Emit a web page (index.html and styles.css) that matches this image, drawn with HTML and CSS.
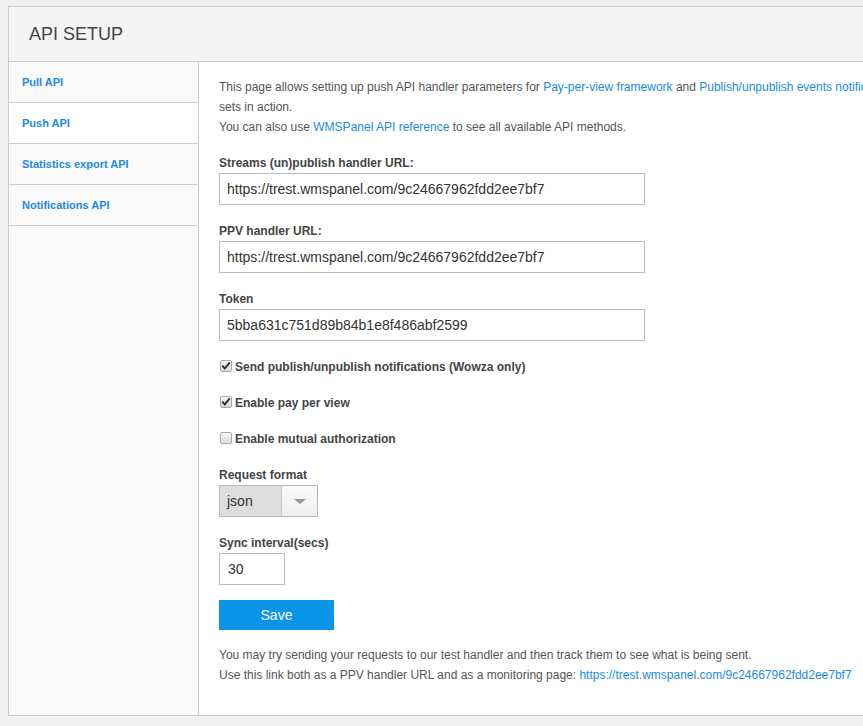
FILE: index.html
```html
<!DOCTYPE html>
<html>
<head>
<meta charset="utf-8">
<link rel="stylesheet" href="styles.css">
</head>
<body>
<div class="panel">
  <div class="header">API SETUP</div>
  <div class="main">
    <nav class="sidebar">
      <a class="nav-item">Pull API</a>
      <a class="nav-item active">Push API</a>
      <a class="nav-item">Statistics export API</a>
      <a class="nav-item">Notifications API</a>
    </nav>
    <div class="content">
      <p class="intro"><span class="nowrap">This page allows setting up push API handler parameters for <a class="link">Pay-per-view framework</a> and <a class="link">Publish/unpublish events notifications</a>. Please see how these API</span><br>sets in action.<br>You can also use <a class="link">WMSPanel API reference</a> to see all available API methods.</p>

      <div class="field">
        <label class="label">Streams (un)publish handler URL:</label>
        <div class="input wide">https://trest.wmspanel.com/9c24667962fdd2ee7bf7</div>
      </div>
      <div class="field">
        <label class="label">PPV handler URL:</label>
        <div class="input wide">https://trest.wmspanel.com/9c24667962fdd2ee7bf7</div>
      </div>
      <div class="field">
        <label class="label">Token</label>
        <div class="input wide">5bba631c751d89b84b1e8f486abf2599</div>
      </div>

      <div class="check-row first">
        <span class="checkbox"><svg width="10" height="9" viewBox="0 0 10 9"><path d="M1.2 4.6 L3.8 7.4 L8.8 1.4" fill="none" stroke="#333" stroke-width="2"/></svg></span>
        <span class="check-label">Send publish/unpublish notifications (Wowza only)</span>
      </div>
      <div class="check-row">
        <span class="checkbox"><svg width="10" height="9" viewBox="0 0 10 9"><path d="M1.2 4.6 L3.8 7.4 L8.8 1.4" fill="none" stroke="#333" stroke-width="2"/></svg></span>
        <span class="check-label">Enable pay per view</span>
      </div>
      <div class="check-row last">
        <span class="checkbox"></span>
        <span class="check-label">Enable mutual authorization</span>
      </div>

      <div class="field">
        <label class="label">Request format</label>
        <div class="select">
          <span class="select-value">json</span>
          <span class="select-arrow"><span class="triangle"></span></span>
        </div>
      </div>
      <div class="field">
        <label class="label">Sync interval(secs)</label>
        <div class="input short">30</div>
      </div>

      <button class="save">Save</button>

      <p class="note">You may try sending your requests to our test handler and then track them to see what is being sent.<br>Use this link both as a PPV handler URL and as a monitoring page: <a class="link">https://trest.wmspanel.com/9c24667962fdd2ee7bf7</a></p>
    </div>
  </div>
</div>
</body>
</html>
```

FILE: styles.css
```css
html, body {
  margin: 0;
  padding: 0;
  overflow: hidden;
}
body {
  background: #f0f0f0;
  font-family: "Liberation Sans", Arial, sans-serif;
  width: 863px;
  height: 726px;
}
.panel {
  margin: 6px 0 0 8px;
  width: 1100px;
  height: 710px;
  box-sizing: border-box;
  border: 1px solid #cccccc;
  background: #ffffff;
  display: flex;
  flex-direction: column;
}
.header {
  height: 54px;
  border-bottom: 1px solid #cccccc;
  background: #f4f4f4;
  padding-left: 20px;
  display: flex;
  align-items: center;
  font-size: 18px;
  color: #444444;
  flex-shrink: 0;
}
.main {
  flex: 1;
  display: flex;
}
.sidebar {
  width: 189px;
  border-right: 1px solid #cccccc;
  background: #fafafa;
  display: flex;
  flex-direction: column;
  flex-shrink: 0;
}
.nav-item {
  height: 40px;
  border-bottom: 1px solid #cccccc;
  display: flex;
  align-items: center;
  padding-left: 13px;
  font-size: 11px;
  font-weight: bold;
  color: #1b8be3;
}
.nav-item.active {
  background: #ffffff;
}
.content {
  padding: 15px 20px 0 20px;
  font-size: 12px;
  line-height: 20px;
  color: #555555;
}
.content p {
  margin: 0;
}
.nowrap {
  white-space: nowrap;
}
.link {
  color: #1b8be3;
}
.intro {
  margin-bottom: 15px !important;
}
.field {
  margin-bottom: 15px;
}
.label {
  display: block;
  font-weight: bold;
  color: #444444;
  padding-top: 1px;
  line-height: 20px;
  margin-bottom: 0;
}
.input {
  box-sizing: border-box;
  height: 32px;
  border: 1px solid #bbbbbb;
  background: #ffffff;
  font-size: 14px;
  color: #333333;
  padding-left: 7px;
  display: flex;
  align-items: center;
}
.input.wide {
  width: 426px;
}
.input.short {
  width: 66px;
  padding-left: 8px;
}
.check-row {
  height: 20px;
  display: flex;
  align-items: center;
  margin-bottom: 16px;
}
.check-row.first {
  margin-top: 16px;
}
.check-row.last {
  margin-bottom: 15px;
}
.checkbox {
  box-sizing: border-box;
  width: 12px;
  height: 12px;
  margin-left: 1px;
  margin-right: 3px;
  border: 1px solid #a8a8a8;
  border-radius: 2px;
  background: linear-gradient(#f6f6f6, #dcdcdc);
  display: flex;
  align-items: center;
  justify-content: center;
  margin-top: -3px;
}
.check-label {
  font-weight: bold;
  color: #444444;
}
.select {
  box-sizing: border-box;
  width: 99px;
  height: 32px;
  border: 1px solid #bbbbbb;
  display: flex;
}
.select-value {
  width: 54px;
  background: #dddddd;
  font-size: 14px;
  color: #333333;
  padding-left: 7px;
  display: flex;
  align-items: center;
  border-right: 1px solid #c8c8c8;
}
.select-arrow {
  flex: 1;
  background: linear-gradient(#fafafa, #eeeeee);
  display: flex;
  align-items: center;
  justify-content: center;
}
.triangle {
  width: 0;
  height: 0;
  border-left: 6px solid transparent;
  border-right: 6px solid transparent;
  border-top: 5px solid #999999;
  margin-left: 1px;
}
.save {
  display: block;
  width: 115px;
  height: 30px;
  border: none;
  background: #0a95e8;
  color: #ffffff;
  font-family: "Liberation Sans", Arial, sans-serif;
  font-size: 14px;
  padding: 0;
  margin: 0 0 15px 0;
}
```
